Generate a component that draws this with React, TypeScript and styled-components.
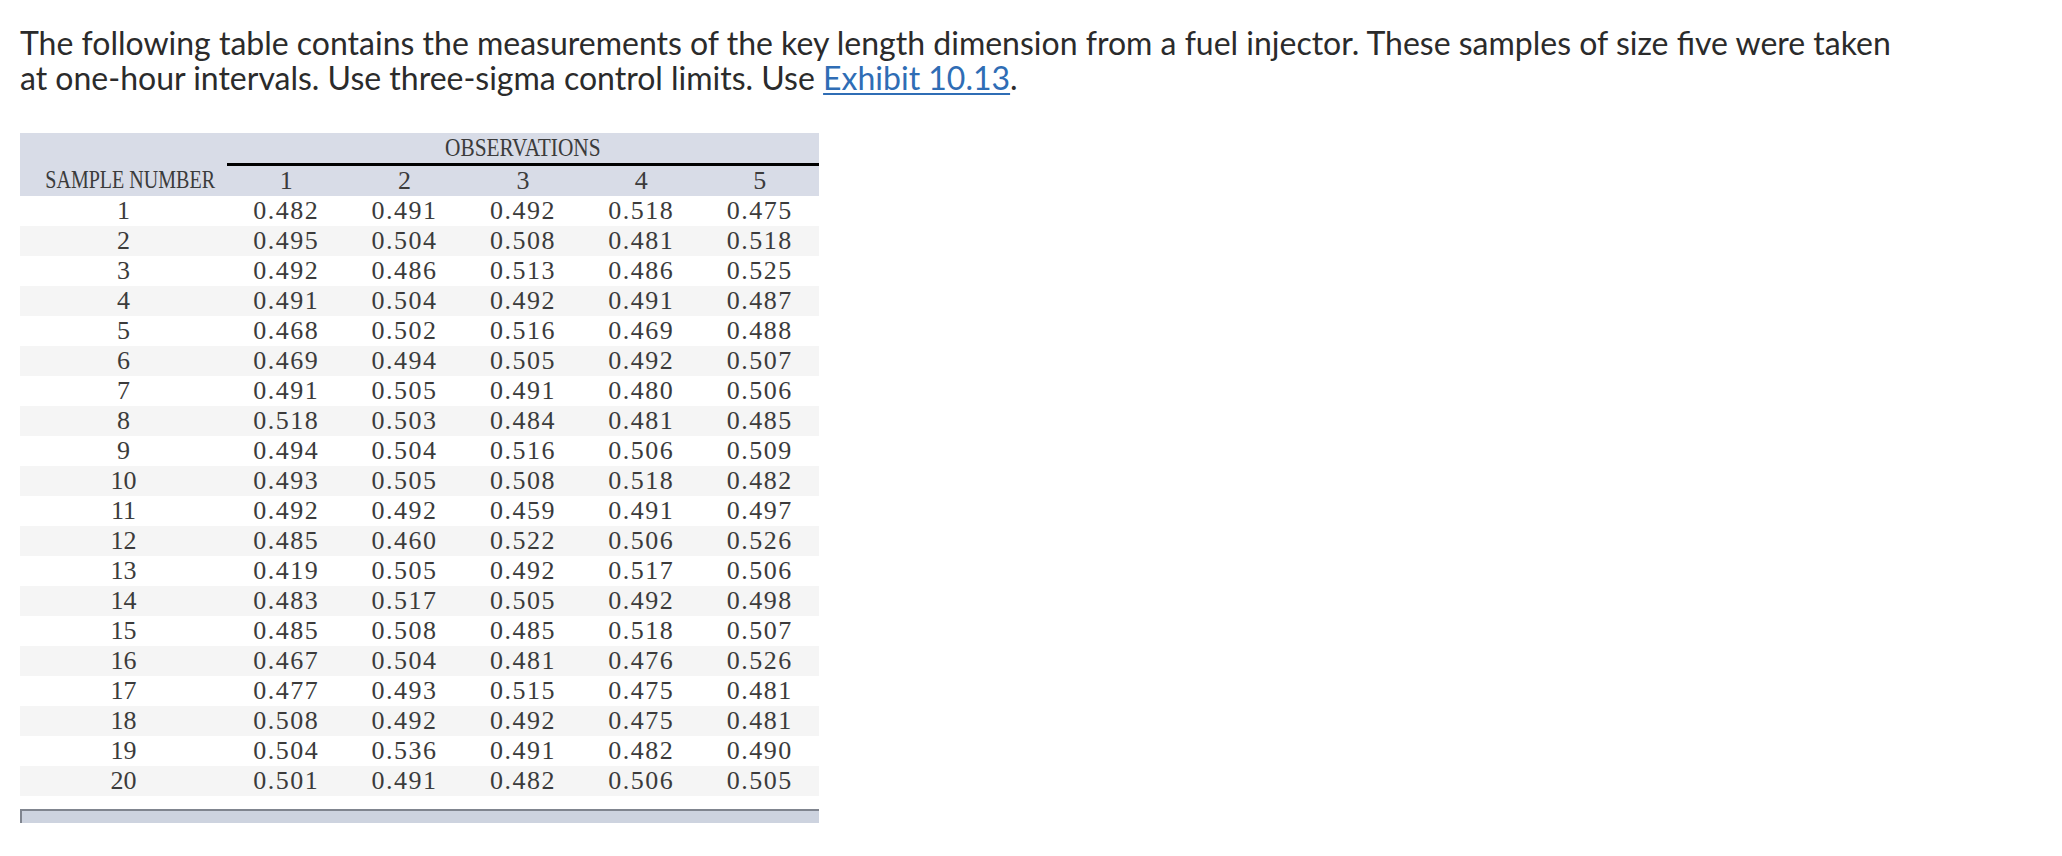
import React from "react";
import styled, { createGlobalStyle } from "styled-components";

// Rows of the measurement table: sample number is the index + 1.
const SAMPLES: string[][] = [
  ["0.482", "0.491", "0.492", "0.518", "0.475"],
  ["0.495", "0.504", "0.508", "0.481", "0.518"],
  ["0.492", "0.486", "0.513", "0.486", "0.525"],
  ["0.491", "0.504", "0.492", "0.491", "0.487"],
  ["0.468", "0.502", "0.516", "0.469", "0.488"],
  ["0.469", "0.494", "0.505", "0.492", "0.507"],
  ["0.491", "0.505", "0.491", "0.480", "0.506"],
  ["0.518", "0.503", "0.484", "0.481", "0.485"],
  ["0.494", "0.504", "0.516", "0.506", "0.509"],
  ["0.493", "0.505", "0.508", "0.518", "0.482"],
  ["0.492", "0.492", "0.459", "0.491", "0.497"],
  ["0.485", "0.460", "0.522", "0.506", "0.526"],
  ["0.419", "0.505", "0.492", "0.517", "0.506"],
  ["0.483", "0.517", "0.505", "0.492", "0.498"],
  ["0.485", "0.508", "0.485", "0.518", "0.507"],
  ["0.467", "0.504", "0.481", "0.476", "0.526"],
  ["0.477", "0.493", "0.515", "0.475", "0.481"],
  ["0.508", "0.492", "0.492", "0.475", "0.481"],
  ["0.504", "0.536", "0.491", "0.482", "0.490"],
  ["0.501", "0.491", "0.482", "0.506", "0.505"],
];

const GlobalStyle = createGlobalStyle`
  html, body {
    margin: 0;
    padding: 0;
    background: #ffffff;
  }
`;

const Page = styled.div`
  padding: 0 20px;
`;

const Prose = styled.p`
  margin: 25px 0 0;
  max-width: 1890px;
  font-family: Lato, "Open Sans", sans-serif;
  font-size: 32px;
  line-height: 35px;
  color: #2b2b2b;
`;

const ExhibitLink = styled.a`
  color: #2f6db5;
  text-decoration: underline;
  text-decoration-thickness: 2px;
  text-underline-offset: 3px;
`;

const Table = styled.table`
  margin-top: 38px;
  width: 799px;
  table-layout: fixed;
  border-collapse: collapse;
  font-family: "Liberation Serif", "Times New Roman", serif;
  font-size: 26px;
  line-height: 30px;
  color: #3b3b3b;
`;

const HeadRow = styled.tr`
  background: #d8dce7;
`;

const HeadCell = styled.th<{ $rule?: boolean }>`
  height: 30px;
  padding: 0;
  font-weight: normal;
  text-align: center;
  border-bottom: ${(p) => (p.$rule ? "3px solid #000000" : "none")};
`;

const Row = styled.tr<{ $striped: boolean }>`
  background: ${(p) => (p.$striped ? "#f5f5f5" : "#ffffff")};
`;

const Cell = styled.td`
  height: 30px;
  padding: 0;
  text-align: center;
  white-space: nowrap;
`;

const Value = styled.span`
  letter-spacing: 1.5px;
`;

// the source face is a narrow CJK serif, so squeeze the Latin labels
const Label = styled.span<{ $squeeze: number }>`
  display: inline-block;
  white-space: nowrap;
  transform: scaleX(${(p) => p.$squeeze});
`;

const ScrollTrack = styled.div`
  box-sizing: border-box;
  width: 799px;
  height: 14px;
  margin-top: 13px;
  background: #cdd3df;
  border-top: 2px solid #80858f;
  border-left: 2px solid #80858f;
`;

const App = () => {
  return (
    <Page>
      <GlobalStyle />
      <Prose>
        The following table contains the measurements of the key length
        dimension from a fuel injector. These samples of size five were taken
        at one-hour intervals. Use three-sigma control limits. Use{" "}
        <ExhibitLink href="#">Exhibit 10.13</ExhibitLink>.
      </Prose>
      <Table>
        <colgroup>
          <col style={{ width: 207 }} />
          <col />
          <col />
          <col />
          <col />
          <col />
        </colgroup>
        <thead>
          <HeadRow>
            <HeadCell />
            <HeadCell colSpan={5} $rule>
              <Label $squeeze={0.82}>OBSERVATIONS</Label>
            </HeadCell>
          </HeadRow>
          <HeadRow>
            <HeadCell>
              <Label $squeeze={0.77}>SAMPLE NUMBER</Label>
            </HeadCell>
            {[1, 2, 3, 4, 5].map((n) => (
              <HeadCell key={n}>{n}</HeadCell>
            ))}
          </HeadRow>
        </thead>
        <tbody>
          {SAMPLES.map((values, i) => (
            <Row key={i} $striped={i % 2 === 1}>
              <Cell>{i + 1}</Cell>
              {values.map((v, j) => (
                <Cell key={j}>
                  <Value>{v}</Value>
                </Cell>
              ))}
            </Row>
          ))}
        </tbody>
      </Table>
      <ScrollTrack />
    </Page>
  );
};

export default App;
